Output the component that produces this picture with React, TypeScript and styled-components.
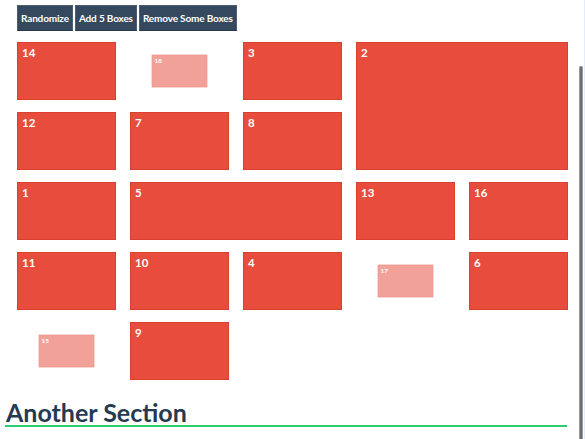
import React from "react";
import styled, { createGlobalStyle } from "styled-components";

const Global = createGlobalStyle`
  html, body { margin: 0; padding: 0; background: #fff; overflow: hidden; }
  body { font-family: "Lato", "Open Sans", sans-serif; }
`;

const Page = styled.div`
  width: 585px;
  height: 439px;
  display: flex;
  flex-direction: column;
  padding: 5px 18px 0 5px;
  box-sizing: border-box;
`;

const Toolbar = styled.div`
  display: flex;
  gap: 2px;
  padding-left: 12px;
`;

const Button = styled.button`
  height: 26px;
  padding: 0 3px;
  background: #34495e;
  color: #fff;
  border: 1px solid #4a5f74;
  border-bottom-color: #26384a;
  font-family: "Lato", sans-serif;
  font-weight: 700;
  font-size: 10px;
  letter-spacing: -0.15px;
  cursor: pointer;
`;

const Grid = styled.div`
  display: grid;
  grid-template-columns: repeat(5, 99px);
  grid-auto-rows: 58px;
  column-gap: 14px;
  row-gap: 12px;
  margin: 11px 0 0 12px;
`;

const Box = styled.div<{ $col: number; $row: number; $w?: number; $h?: number; $fading?: boolean }>`
  grid-column: ${(p) => p.$col} / span ${(p) => p.$w ?? 1};
  grid-row: ${(p) => p.$row} / span ${(p) => p.$h ?? 1};
  background: #e74c3c;
  border: 1px solid #d8402f;
  box-sizing: border-box;
  color: #fff;
  font-family: "Lato", sans-serif;
  font-weight: 700;
  font-size: 11.5px;
  padding: 3px 0 0 4px;
  opacity: ${(p) => (p.$fading ? 0.52 : 1)};
  transform: ${(p) => (p.$fading ? "scale(0.56)" : "none")};
`;

const Heading = styled.h2`
  margin: 19px 0 0 0;
  font-family: "Lato", sans-serif;
  font-weight: 700;
  font-size: 25px;
  line-height: 26px;
  color: #253a52;
  border-bottom: 2px solid #2ecc71;
  padding-left: 1px;
`;

const ScrollLine = styled.div`
  position: fixed;
  top: 0;
  right: 0;
  width: 1px;
  height: 439px;
  background: #e3ecf8;
`;

const ScrollThumb = styled.div`
  position: fixed;
  top: 66px;
  right: 2px;
  width: 4px;
  bottom: 0;
  background: #6e6e6e;
  border-left: 1px solid #9a9a9a;
  border-right: 1px solid #9a9a9a;
  border-radius: 2px 2px 0 0;
  box-sizing: border-box;
`;

type B = { n: number; c: number; r: number; w?: number; h?: number; f?: boolean };

const boxes: B[] = [
  { n: 14, c: 1, r: 1 },
  { n: 18, c: 2, r: 1, f: true },
  { n: 3, c: 3, r: 1 },
  { n: 2, c: 4, r: 1, w: 2, h: 2 },
  { n: 12, c: 1, r: 2 },
  { n: 7, c: 2, r: 2 },
  { n: 8, c: 3, r: 2 },
  { n: 1, c: 1, r: 3 },
  { n: 5, c: 2, r: 3, w: 2 },
  { n: 13, c: 4, r: 3 },
  { n: 16, c: 5, r: 3 },
  { n: 11, c: 1, r: 4 },
  { n: 10, c: 2, r: 4 },
  { n: 4, c: 3, r: 4 },
  { n: 17, c: 4, r: 4, f: true },
  { n: 6, c: 5, r: 4 },
  { n: 15, c: 1, r: 5, f: true },
  { n: 9, c: 2, r: 5 },
];

export default function App() {
  return (
    <>
      <Global />
      <Page>
        <Toolbar>
          <Button>Randomize</Button>
          <Button>Add 5 Boxes</Button>
          <Button>Remove Some Boxes</Button>
        </Toolbar>
        <Grid>
          {boxes.map((b) => (
            <Box key={b.n} $col={b.c} $row={b.r} $w={b.w} $h={b.h} $fading={b.f}>
              {b.n}
            </Box>
          ))}
        </Grid>
        <Heading>Another Section</Heading>
      </Page>
      <ScrollLine />
      <ScrollThumb />
    </>
  );
}
